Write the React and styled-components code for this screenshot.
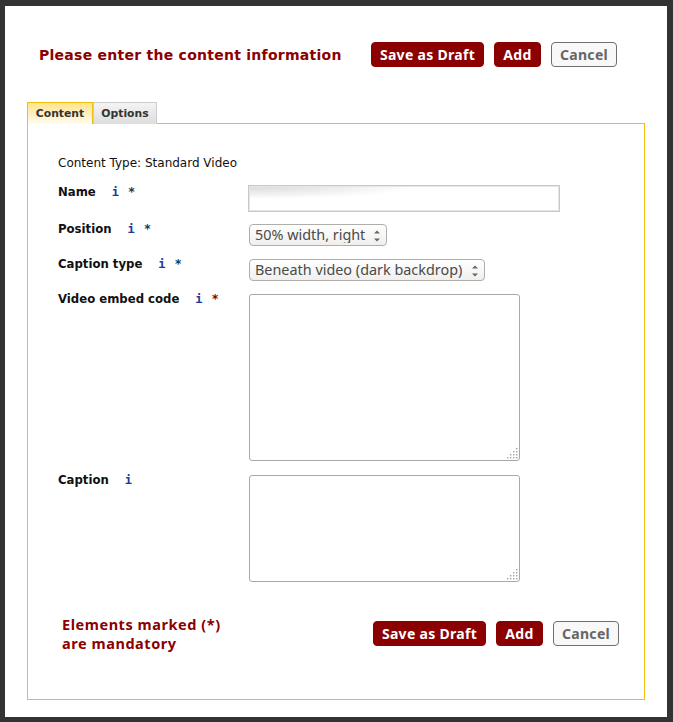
import React from "react";
import styled, { createGlobalStyle } from "styled-components";

const GlobalStyle = createGlobalStyle`
  html, body {
    margin: 0;
    padding: 0;
    background: #333333;
  }
`;

const Page = styled.div`
  box-sizing: border-box;
  width: 673px;
  height: 722px;
  padding: 6px 6px 5px 5px;
  background: #333333;
`;

const Sheet = styled.div`
  box-sizing: border-box;
  height: 711px;
  padding: 36px 22px 0;
  background: #ffffff;
`;

const Header = styled.div`
  display: flex;
  align-items: center;
  height: 25px;
  margin-bottom: 35px;
  padding-left: 12px;
`;

const Heading = styled.h1`
  width: 332px;
  margin: 0;
  font: bold 14px "DejaVu Sans", Verdana, sans-serif;
  letter-spacing: 0.26px;
  color: #8b0000;
`;

const Buttons = styled.div`
  display: flex;
  gap: 10px;
  margin-top: ${props => props.$top || 0}px;
`;

const Button = styled.button`
  box-sizing: border-box;
  width: ${props => props.$width}px;
  height: 25px;
  padding: 0;
  border: 1px solid ${props => (props.$plain ? "#6f6f6f" : "#8b0000")};
  border-radius: 4px;
  background: ${props => (props.$plain ? "#f8f8f8" : "#8b0000")};
  color: ${props => (props.$plain ? "#666666" : "#ffffff")};
  font: bold 14px "Noto Sans", "Open Sans", sans-serif;
  letter-spacing: 0.3px;
`;

const Tabs = styled.div`
  display: flex;
  height: 21px;
`;

const Tab = styled.div`
  position: relative;
  box-sizing: border-box;
  width: ${props => props.$width}px;
  height: 22px;
  padding-top: 4px;
  border: 1px solid ${props => (props.$active ? "#efc00f" : "#cccccc")};
  border-bottom: none;
  background: ${props =>
    props.$active
      ? "linear-gradient(#ffe38f, #fffbee)"
      : "linear-gradient(#f4f4f4, #dddddd)"};
  color: #333333;
  font: bold 10.8px "DejaVu Sans", Verdana, sans-serif;
  text-align: center;
  z-index: ${props => (props.$active ? 1 : 0)};
`;

const Panel = styled.div`
  box-sizing: border-box;
  width: 618px;
  height: 577px;
  padding: 32px 25px 0 30px;
  border: 1px solid #efc00f;
`;

const ContentType = styled.div`
  height: 15px;
  margin-bottom: 14px;
  font: 12px "DejaVu Sans", Verdana, sans-serif;
  color: #111111;
`;

const Row = styled.div`
  display: grid;
  grid-template-columns: 190px 1fr;
  margin-bottom: ${props => props.$gap}px;
`;

const Label = styled.div`
  display: flex;
  align-items: flex-start;
  height: 16px;
  margin-top: ${props => props.$top || 0}px;
  font: bold 11.7px "DejaVu Sans", Verdana, sans-serif;
  color: #111111;
`;

const Info = styled.span`
  margin-left: 16px;
  font: bold 12px "DejaVu Sans Mono", monospace;
  color: #1a3aa0;
`;

const Star = styled.span`
  margin-left: 9.5px;
  font: bold 12px "DejaVu Sans", sans-serif;
  color: ${props => props.$color};
`;

const NameInput = styled.input`
  box-sizing: border-box;
  display: block;
  width: 312px;
  height: 27px;
  margin: 0;
  padding: 0;
  border: 1px solid #c8c8c8;
  box-shadow: inset 0 0 0 1px #e6e6e6;
  background: radial-gradient(ellipse 170px 13px at 0 0, #e0e0e0 20%, #ffffff 100%);
`;

const SelectBox = styled.div`
  position: relative;
  box-sizing: border-box;
  width: ${props => props.$width}px;
  height: 22px;
  margin-left: 1px;
  border: 1px solid #b0aea8;
  border-radius: 4px;
  background: linear-gradient(#ffffff, #f0efed);
`;

const Select = styled.select`
  display: block;
  width: 100%;
  height: 100%;
  padding: 0 0 2px 5px;
  border: none;
  background: transparent;
  appearance: none;
  font: 14.4px "Noto Sans", "Open Sans", sans-serif;
  color: #4a4a4a;
`;

const Arrows = styled.svg`
  position: absolute;
  top: 4px;
  right: 5px;
  width: 8px;
  height: 14px;
  pointer-events: none;
`;

const AreaBox = styled.div`
  position: relative;
  width: 271px;
  height: ${props => props.$height}px;
  margin-left: 1px;
`;

const Area = styled.textarea`
  box-sizing: border-box;
  display: block;
  width: 100%;
  height: 100%;
  margin: 0;
  border: 1px solid #aaa9a3;
  border-radius: 3px;
  background: #ffffff;
  resize: none;
`;

const Grip = styled.svg`
  position: absolute;
  right: 2px;
  bottom: 2px;
  width: 11px;
  height: 11px;
  pointer-events: none;
`;

const Footer = styled.div`
  display: flex;
  justify-content: space-between;
  margin-top: 33px;
  padding-left: 4px;
`;

const Mandatory = styled.div`
  font: bold 14.5px/19px "Noto Sans", "Open Sans", sans-serif;
  letter-spacing: 0.55px;
  color: #8b0000;
`;

const GripDots = () => (
  <Grip viewBox="0 0 11 11">
    {[[9, 0], [6, 3], [9, 3], [3, 6], [6, 6], [9, 6], [0, 9], [3, 9], [6, 9], [9, 9]].map(([x, y]) => (
      <rect key={`${x}-${y}`} x={x} y={y} width="1.4" height="1.4" fill="#a5a39d" />
    ))}
  </Grip>
);

const Dropdown = ({ width, value }) => (
  <SelectBox $width={width}>
    <Select defaultValue={value}>
      <option>{value}</option>
    </Select>
    <Arrows viewBox="0 0 8 14">
      <path d="M1 4.5 L4 1.5 L7 4.5 Z M1 9.5 L4 12.5 L7 9.5 Z" fill="#666666" />
    </Arrows>
  </SelectBox>
);

const FormLabel = ({ text, star, top }) => (
  <Label $top={top}>
    {text}
    <Info>i</Info>
    {star && <Star $color={star}>*</Star>}
  </Label>
);

const ActionButtons = ({ top }) => (
  <Buttons $top={top}>
    <Button $width={113}>Save as Draft</Button>
    <Button $width={47}>Add</Button>
    <Button $width={66} $plain>Cancel</Button>
  </Buttons>
);

export default function App() {
  return (
    <>
      <GlobalStyle />
      <Page>
        <Sheet>
          <Header>
            <Heading>Please enter the content information</Heading>
            <ActionButtons />
          </Header>
          <Tabs>
            <Tab $width={66} $active>Content</Tab>
            <Tab $width={64}>Options</Tab>
          </Tabs>
          <Panel>
            <ContentType>Content Type: Standard Video</ContentType>
            <Row $gap={12}>
              <FormLabel text="Name" star="#333333" />
              <NameInput />
            </Row>
            <Row $gap={13}>
              <FormLabel text="Position" star="#003a70" top={-2} />
              <Dropdown width={138} value="50% width, right" />
            </Row>
            <Row $gap={13}>
              <FormLabel text="Caption type" star="#003a70" top={-2} />
              <Dropdown width={236} value="Beneath video (dark backdrop)" />
            </Row>
            <Row $gap={14}>
              <FormLabel text="Video embed code" star="#8b0000" top={-2} />
              <AreaBox $height={167}>
                <Area />
                <GripDots />
              </AreaBox>
            </Row>
            <Row $gap={0}>
              <FormLabel text="Caption" top={-2} />
              <AreaBox $height={107}>
                <Area />
                <GripDots />
              </AreaBox>
            </Row>
            <Footer>
              <Mandatory>
                Elements marked (*)
                <br />
                are mandatory
              </Mandatory>
              <ActionButtons top={6} />
            </Footer>
          </Panel>
        </Sheet>
      </Page>
    </>
  );
}
